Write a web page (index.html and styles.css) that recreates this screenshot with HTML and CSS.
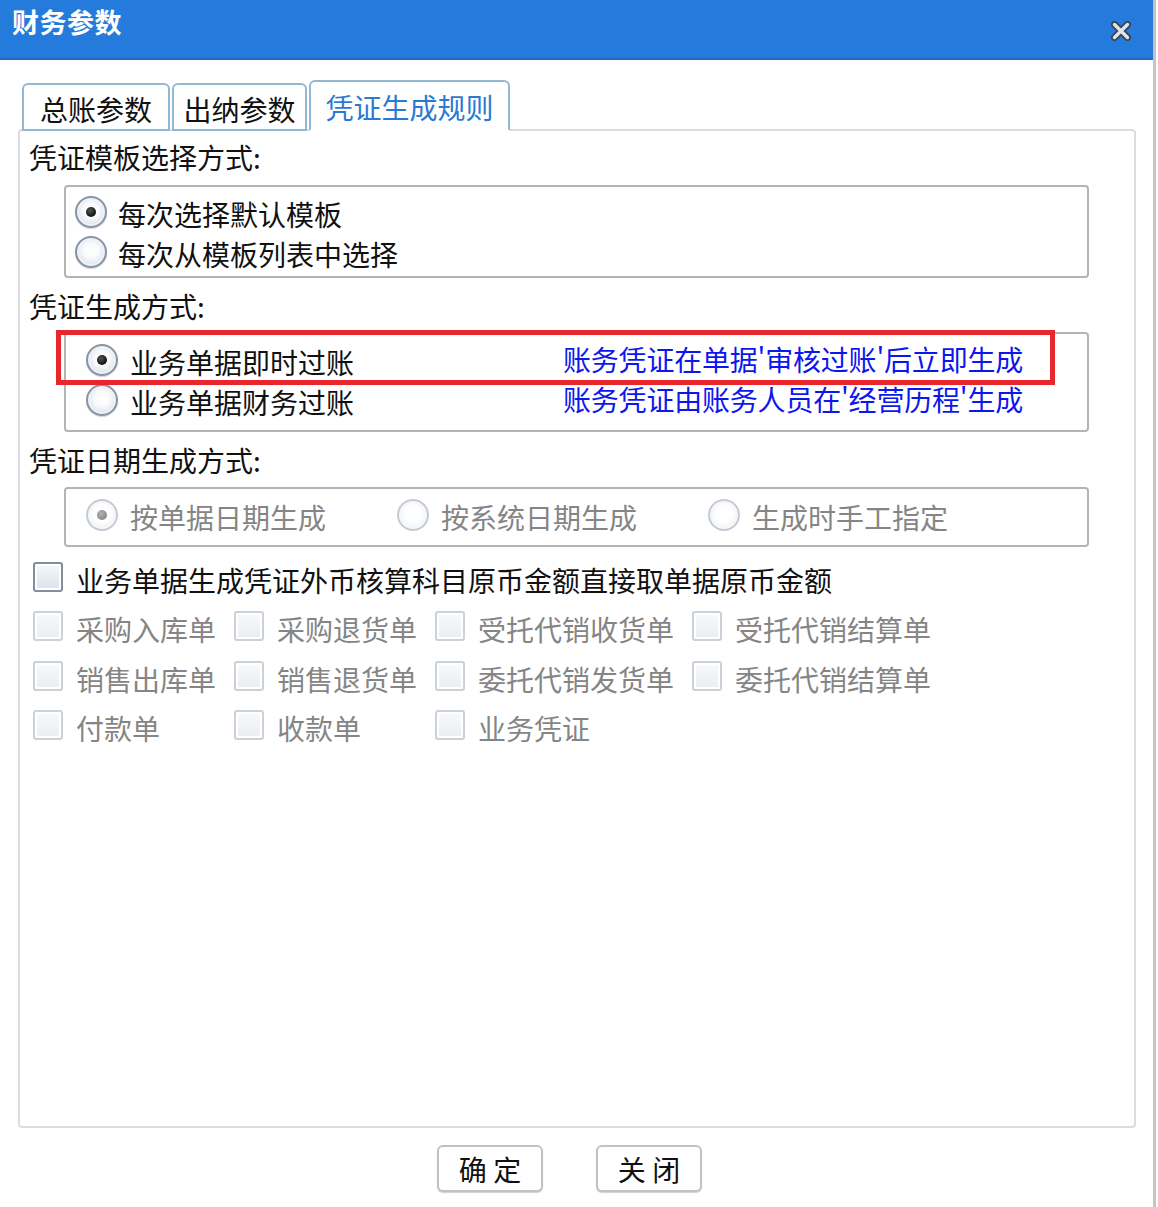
FILE: index.html
```html
<!DOCTYPE html>
<html lang="zh-CN">
<head>
<meta charset="utf-8">
<title>财务参数</title>
<link rel="stylesheet" href="styles.css">
</head>
<body>
<div class="dialog">
  <div class="titlebar">
    <span class="title">财务参数</span>
    <svg class="close" width="22" height="20" viewBox="0 0 22 20">
      <path d="M4.5 3.5 L17.5 16.5 M17.5 3.5 L4.5 16.5" stroke="#3a4553" stroke-width="7" stroke-linecap="round" fill="none"/>
      <path d="M4.5 3.5 L17.5 16.5 M17.5 3.5 L4.5 16.5" stroke="#dfe5ec" stroke-width="3.4" stroke-linecap="round" fill="none"/>
    </svg>
  </div>
  <div class="content">
    <div class="tabs">
      <div class="tab t1">总账参数</div>
      <div class="tab t2">出纳参数</div>
      <div class="tab t3 active">凭证生成规则</div>
    </div>
    <div class="panel">
      <div class="label">凭证模板选择方式:</div>
      <div class="box box1">
        <div class="row"><span class="radio on"></span><span class="txt">每次选择默认模板</span></div>
        <div class="row"><span class="radio"></span><span class="txt">每次从模板列表中选择</span></div>
      </div>
      <div class="label l2">凭证生成方式:</div>
      <div class="box box2">
        <div class="row"><span class="radio on"></span><span class="txt wide">业务单据即时过账</span><span class="note">账务凭证在单据'审核过账'后立即生成</span></div>
        <div class="row"><span class="radio"></span><span class="txt wide">业务单据财务过账</span><span class="note">账务凭证由账务人员在'经营历程'生成</span></div>
        <div class="mark"></div>
      </div>
      <div class="label l3">凭证日期生成方式:</div>
      <div class="box box3">
        <div class="row dis"><span class="radio dis on"></span><span class="txt">按单据日期生成</span></div>
        <div class="row dis"><span class="radio dis"></span><span class="txt">按系统日期生成</span></div>
        <div class="row dis"><span class="radio dis"></span><span class="txt">生成时手工指定</span></div>
      </div>
      <div class="row chkrow"><span class="check"></span><span class="txt">业务单据生成凭证外币核算科目原币金额直接取单据原币金额</span></div>
      <div class="grid">
        <div class="row dis"><span class="check dis"></span><span class="txt">采购入库单</span></div>
        <div class="row dis"><span class="check dis"></span><span class="txt">采购退货单</span></div>
        <div class="row dis"><span class="check dis"></span><span class="txt">受托代销收货单</span></div>
        <div class="row dis"><span class="check dis"></span><span class="txt">受托代销结算单</span></div>
        <div class="row dis"><span class="check dis"></span><span class="txt">销售出库单</span></div>
        <div class="row dis"><span class="check dis"></span><span class="txt">销售退货单</span></div>
        <div class="row dis"><span class="check dis"></span><span class="txt">委托代销发货单</span></div>
        <div class="row dis"><span class="check dis"></span><span class="txt">委托代销结算单</span></div>
        <div class="row dis"><span class="check dis"></span><span class="txt">付款单</span></div>
        <div class="row dis"><span class="check dis"></span><span class="txt">收款单</span></div>
        <div class="row dis"><span class="check dis"></span><span class="txt">业务凭证</span></div>
      </div>
    </div>
  </div>
  <div class="buttons">
    <button class="btn">确 定</button>
    <button class="btn">关 闭</button>
  </div>
</div>
</body>
</html>
```

FILE: styles.css
```css
html, body {
  margin: 0;
  padding: 0;
  background: #ffffff;
}

body {
  font-family: "Noto Sans CJK SC", "Noto Sans", sans-serif;
  font-size: 28px;
  color: #111111;
}

.dialog {
  width: 1153px;
  min-height: 1207px;
  border-right: 3px solid #c4c4c4;
  background: #ffffff;
}

.titlebar {
  height: 54px;
  border-bottom: 2px solid #1c6bc9;
  background: #247bdb;
  display: flex;
  justify-content: space-between;
  align-items: flex-start;
  padding: 4px 21px 0 12px;
}

.title {
  color: #ffffff;
  font-weight: bold;
  font-size: 27px;
  line-height: 36px;
  letter-spacing: 0.5px;
}

.close {
  margin-top: 17px;
  display: block;
}

.content {
  padding: 20px 0 0 18px;
}

.tabs {
  display: flex;
  align-items: flex-end;
  gap: 2px;
  margin-left: 4px;
  margin-bottom: -2px;
  position: relative;
  z-index: 1;
}

.tab {
  box-sizing: border-box;
  border: 2px solid #93b8d0;
  border-radius: 6px 6px 0 0;
  background: #ffffff;
  line-height: 36px;
  text-align: center;
  height: 48px;
  padding-top: 6px;
  color: #111111;
}

.t1 { width: 148px; }
.t2 { width: 135px; }
.t3 { width: 201px; }

.tab.active {
  height: 51px;
  padding-top: 7px;
  border-bottom-color: #ffffff;
  color: #2a7ad4;
}

.panel {
  box-sizing: border-box;
  width: 1118px;
  height: 999px;
  border: 2px solid #dcdcdc;
  border-radius: 4px;
  padding: 8px 0 0 9px;
}

.label {
  line-height: 36px;
  height: 36px;
  white-space: nowrap;
}

.l2 { margin-top: 10px; }
.l3 { margin-top: 10px; }

.box {
  box-sizing: border-box;
  border: 2px solid #b4b4b4;
  border-radius: 4px;
  margin-left: 35px;
  margin-right: 45px;
  position: relative;
}

.box1 {
  margin-top: 10px;
  height: 93px;
  padding: 7px 0 0 9px;
}

.box2 {
  margin-top: 8px;
  height: 100px;
  padding: 8px 0 0 20px;
}

.box3 {
  margin-top: 9px;
  height: 60px;
  padding: 8px 0 0 20px;
  display: flex;
}

.box3 .row {
  width: 311px;
}

.row {
  display: flex;
  align-items: center;
  height: 40px;
  line-height: 40px;
  white-space: nowrap;
}

.txt {
  margin-left: 11px;
}

.box2 .txt,
.box3 .txt {
  margin-left: 12px;
}

.txt.wide {
  width: 433px;
}

.note {
  color: #0c17ee;
  letter-spacing: -0.2px;
  margin-bottom: 6px;
}

.row.dis .txt {
  color: #858585;
}

.radio {
  flex: none;
  box-sizing: border-box;
  width: 32px;
  height: 32px;
  border-radius: 50%;
  border: 2px solid #8794a5;
  background: radial-gradient(circle at 50% 45%, #ffffff 0, #fafbfc 34%, #dfe5ec 70%, #c3ccd6 100%);
  box-shadow: inset 0 0 0 2px #eef1f5, 0 1px 1px rgba(120, 130, 145, 0.35);
  position: relative;
  margin-bottom: 4px;
}

.radio.on::after {
  content: "";
  position: absolute;
  left: 50%;
  top: 50%;
  width: 10px;
  height: 10px;
  margin: -5px 0 0 -5px;
  border-radius: 50%;
  background: radial-gradient(circle at 40% 35%, #555555, #111111 70%);
}

.radio.dis {
  border-color: #c4cbd4;
  background: radial-gradient(circle at 50% 45%, #ffffff 0, #ffffff 38%, #eef1f4 76%, #dde2e8 100%);
  box-shadow: inset 0 0 0 2px #f5f7f9;
}

.radio.dis.on::after {
  background: radial-gradient(circle at 40% 35%, #b0b0b0, #8a8a8a 70%);
}

.chkrow {
  margin-top: 13px;
  margin-left: 4px;
}

.check {
  flex: none;
  box-sizing: border-box;
  width: 30px;
  height: 30px;
  border: 2px solid #7f8ea0;
  border-radius: 3px;
  background: linear-gradient(#f5f7fa, #dde3ea);
  box-shadow: inset 0 0 0 2px #ffffff;
  margin-bottom: 6px;
}

.check.dis {
  border-color: #cbd1d8;
  background: linear-gradient(#f8f9fb, #eaedf1);
}

.row .check + .txt {
  margin-left: 13px;
}

.grid {
  display: grid;
  grid-template-columns: 201px 201px 257px auto;
  row-gap: 9.5px;
  margin-top: 9px;
  margin-left: 4px;
}

.mark {
  position: absolute;
  left: -10px;
  top: -4px;
  width: 999px;
  height: 55px;
  box-sizing: border-box;
  border: 5px solid #e8262c;
}

.buttons {
  display: flex;
  justify-content: center;
  gap: 53px;
  margin-top: 17px;
  padding-right: 14px;
}

.btn {
  box-sizing: border-box;
  width: 106px;
  height: 47px;
  border: 2px solid #c2c2c2;
  border-radius: 6px;
  background: #ffffff;
  box-shadow: 0 1px 1px #d0d0d0;
  font-family: "Noto Sans CJK SC", "Noto Sans", sans-serif;
  font-size: 28px;
  line-height: 40px;
  color: #111111;
  padding: 0;
}
```
